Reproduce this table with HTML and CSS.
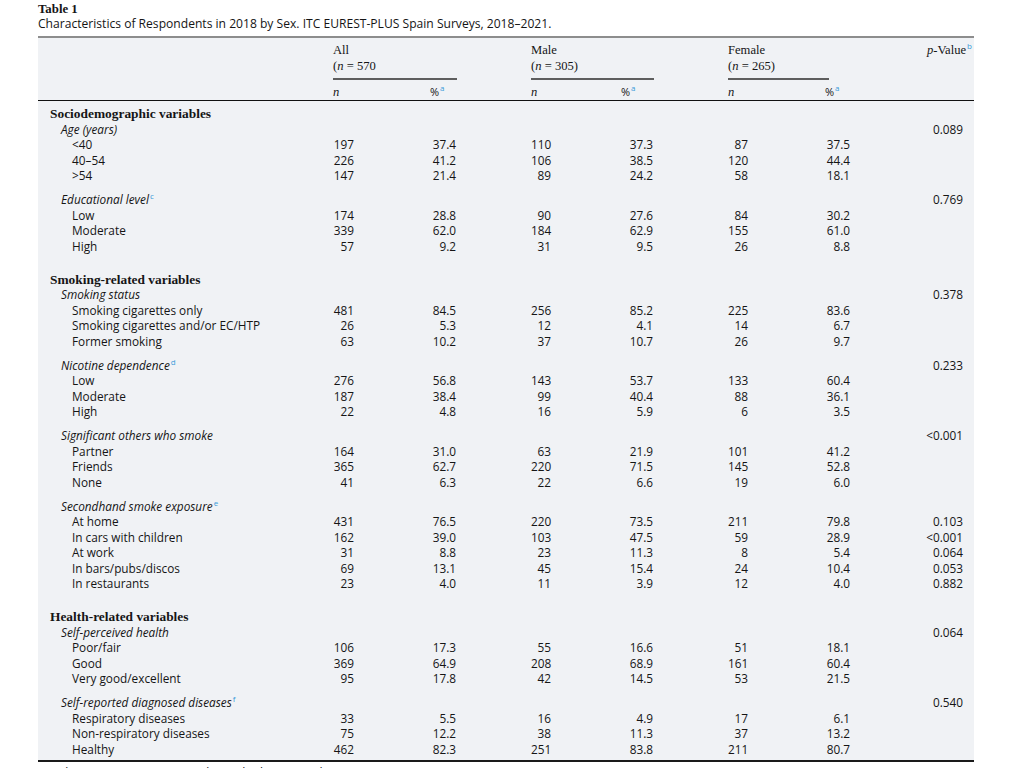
FILE: index.html
```html
<!DOCTYPE html>
<html lang="en">
<head>
<meta charset="utf-8">
<title>Table 1</title>
<link rel="stylesheet" href="styles.css">
</head>
<body>
<div class="page">
  <div class="tbl-title">Table 1</div>
  <div class="tbl-caption">Characteristics of Respondents in 2018 by Sex. ITC EUREST-PLUS Spain Surveys, 2018–2021.</div>
  <table class="tbl">
    <colgroup>
      <col class="w-label"><col class="w-an"><col class="w-ap"><col class="w-mn"><col class="w-mp"><col class="w-fn"><col class="w-fp"><col class="w-p">
    </colgroup>
    <thead>
      <tr class="h1">
        <th></th>
        <th colspan="2" class="grp"><div class="grp-name">All</div><div class="grp-n">(<i>n</i> = 570</div><div class="grp-line line-all"></div></th>
        <th colspan="2" class="grp"><div class="grp-name">Male</div><div class="grp-n">(<i>n</i> = 305)</div><div class="grp-line line-male"></div></th>
        <th colspan="2" class="grp"><div class="grp-name">Female</div><div class="grp-n">(<i>n</i> = 265)</div><div class="grp-line line-female"></div></th>
        <th class="pv"><i>p</i>-Value<sup class="fn">b</sup></th>
      </tr>
      <tr class="h2">
        <th></th>
        <th class="sub"><i>n</i></th>
        <th class="sub pct">%<sup class="fn">a</sup></th>
        <th class="sub"><i>n</i></th>
        <th class="sub pct">%<sup class="fn">a</sup></th>
        <th class="sub"><i>n</i></th>
        <th class="sub pct">%<sup class="fn">a</sup></th>
        <th></th>
      </tr>
    </thead>
    <tbody>
      <tr class="first"><td class="sec">Sociodemographic variables</td><td></td><td></td><td></td><td></td><td></td><td></td><td></td></tr>
      <tr><td class="grpl">Age (years)</td><td></td><td></td><td></td><td></td><td></td><td></td><td class="p">0.089</td></tr>
      <tr><td class="item">&lt;40</td><td class="an">197</td><td class="ap">37.4</td><td class="mn">110</td><td class="mp">37.3</td><td class="fnum">87</td><td class="fp">37.5</td><td class="p"></td></tr>
      <tr><td class="item">40–54</td><td class="an">226</td><td class="ap">41.2</td><td class="mn">106</td><td class="mp">38.5</td><td class="fnum">120</td><td class="fp">44.4</td><td class="p"></td></tr>
      <tr><td class="item">&gt;54</td><td class="an">147</td><td class="ap">21.4</td><td class="mn">89</td><td class="mp">24.2</td><td class="fnum">58</td><td class="fp">18.1</td><td class="p"></td></tr>

      <tr class="gap"><td class="grpl">Educational level<sup class="fn">c</sup></td><td></td><td></td><td></td><td></td><td></td><td></td><td class="p">0.769</td></tr>
      <tr><td class="item">Low</td><td class="an">174</td><td class="ap">28.8</td><td class="mn">90</td><td class="mp">27.6</td><td class="fnum">84</td><td class="fp">30.2</td><td class="p"></td></tr>
      <tr><td class="item">Moderate</td><td class="an">339</td><td class="ap">62.0</td><td class="mn">184</td><td class="mp">62.9</td><td class="fnum">155</td><td class="fp">61.0</td><td class="p"></td></tr>
      <tr><td class="item">High</td><td class="an">57</td><td class="ap">9.2</td><td class="mn">31</td><td class="mp">9.5</td><td class="fnum">26</td><td class="fp">8.8</td><td class="p"></td></tr>

      <tr class="secgap"><td class="sec">Smoking-related variables</td><td></td><td></td><td></td><td></td><td></td><td></td><td></td></tr>
      <tr><td class="grpl">Smoking status</td><td></td><td></td><td></td><td></td><td></td><td></td><td class="p">0.378</td></tr>
      <tr><td class="item">Smoking cigarettes only</td><td class="an">481</td><td class="ap">84.5</td><td class="mn">256</td><td class="mp">85.2</td><td class="fnum">225</td><td class="fp">83.6</td><td class="p"></td></tr>
      <tr><td class="item">Smoking cigarettes and/or EC/HTP</td><td class="an">26</td><td class="ap">5.3</td><td class="mn">12</td><td class="mp">4.1</td><td class="fnum">14</td><td class="fp">6.7</td><td class="p"></td></tr>
      <tr><td class="item">Former smoking</td><td class="an">63</td><td class="ap">10.2</td><td class="mn">37</td><td class="mp">10.7</td><td class="fnum">26</td><td class="fp">9.7</td><td class="p"></td></tr>

      <tr class="gap"><td class="grpl">Nicotine dependence<sup class="fn">d</sup></td><td></td><td></td><td></td><td></td><td></td><td></td><td class="p">0.233</td></tr>
      <tr><td class="item">Low</td><td class="an">276</td><td class="ap">56.8</td><td class="mn">143</td><td class="mp">53.7</td><td class="fnum">133</td><td class="fp">60.4</td><td class="p"></td></tr>
      <tr><td class="item">Moderate</td><td class="an">187</td><td class="ap">38.4</td><td class="mn">99</td><td class="mp">40.4</td><td class="fnum">88</td><td class="fp">36.1</td><td class="p"></td></tr>
      <tr><td class="item">High</td><td class="an">22</td><td class="ap">4.8</td><td class="mn">16</td><td class="mp">5.9</td><td class="fnum">6</td><td class="fp">3.5</td><td class="p"></td></tr>

      <tr class="gap"><td class="grpl">Significant others who smoke</td><td></td><td></td><td></td><td></td><td></td><td></td><td class="p">&lt;0.001</td></tr>
      <tr><td class="item">Partner</td><td class="an">164</td><td class="ap">31.0</td><td class="mn">63</td><td class="mp">21.9</td><td class="fnum">101</td><td class="fp">41.2</td><td class="p"></td></tr>
      <tr><td class="item">Friends</td><td class="an">365</td><td class="ap">62.7</td><td class="mn">220</td><td class="mp">71.5</td><td class="fnum">145</td><td class="fp">52.8</td><td class="p"></td></tr>
      <tr><td class="item">None</td><td class="an">41</td><td class="ap">6.3</td><td class="mn">22</td><td class="mp">6.6</td><td class="fnum">19</td><td class="fp">6.0</td><td class="p"></td></tr>

      <tr class="gap"><td class="grpl">Secondhand smoke exposure<sup class="fn">e</sup></td><td></td><td></td><td></td><td></td><td></td><td></td><td class="p"></td></tr>
      <tr><td class="item">At home</td><td class="an">431</td><td class="ap">76.5</td><td class="mn">220</td><td class="mp">73.5</td><td class="fnum">211</td><td class="fp">79.8</td><td class="p">0.103</td></tr>
      <tr><td class="item">In cars with children</td><td class="an">162</td><td class="ap">39.0</td><td class="mn">103</td><td class="mp">47.5</td><td class="fnum">59</td><td class="fp">28.9</td><td class="p">&lt;0.001</td></tr>
      <tr><td class="item">At work</td><td class="an">31</td><td class="ap">8.8</td><td class="mn">23</td><td class="mp">11.3</td><td class="fnum">8</td><td class="fp">5.4</td><td class="p">0.064</td></tr>
      <tr><td class="item">In bars/pubs/discos</td><td class="an">69</td><td class="ap">13.1</td><td class="mn">45</td><td class="mp">15.4</td><td class="fnum">24</td><td class="fp">10.4</td><td class="p">0.053</td></tr>
      <tr><td class="item">In restaurants</td><td class="an">23</td><td class="ap">4.0</td><td class="mn">11</td><td class="mp">3.9</td><td class="fnum">12</td><td class="fp">4.0</td><td class="p">0.882</td></tr>

      <tr class="secgap"><td class="sec">Health-related variables</td><td></td><td></td><td></td><td></td><td></td><td></td><td></td></tr>
      <tr><td class="grpl">Self-perceived health</td><td></td><td></td><td></td><td></td><td></td><td></td><td class="p">0.064</td></tr>
      <tr><td class="item">Poor/fair</td><td class="an">106</td><td class="ap">17.3</td><td class="mn">55</td><td class="mp">16.6</td><td class="fnum">51</td><td class="fp">18.1</td><td class="p"></td></tr>
      <tr><td class="item">Good</td><td class="an">369</td><td class="ap">64.9</td><td class="mn">208</td><td class="mp">68.9</td><td class="fnum">161</td><td class="fp">60.4</td><td class="p"></td></tr>
      <tr><td class="item">Very good/excellent</td><td class="an">95</td><td class="ap">17.8</td><td class="mn">42</td><td class="mp">14.5</td><td class="fnum">53</td><td class="fp">21.5</td><td class="p"></td></tr>

      <tr class="gap"><td class="grpl">Self-reported diagnosed diseases<sup class="fn">f</sup></td><td></td><td></td><td></td><td></td><td></td><td></td><td class="p">0.540</td></tr>
      <tr><td class="item">Respiratory diseases</td><td class="an">33</td><td class="ap">5.5</td><td class="mn">16</td><td class="mp">4.9</td><td class="fnum">17</td><td class="fp">6.1</td><td class="p"></td></tr>
      <tr><td class="item">Non-respiratory diseases</td><td class="an">75</td><td class="ap">12.2</td><td class="mn">38</td><td class="mp">11.3</td><td class="fnum">37</td><td class="fp">13.2</td><td class="p"></td></tr>
      <tr class="last"><td class="item">Healthy</td><td class="an">462</td><td class="ap">82.3</td><td class="mn">251</td><td class="mp">83.8</td><td class="fnum">211</td><td class="fp">80.7</td><td class="p"></td></tr>
    </tbody>
  </table>
  <p class="tbl-foot">EC, electronic cigarettes; HTP, heated tobacco products.</p>
</div>
</body>
</html>
```

FILE: styles.css
```css
html, body {
  margin: 0;
  padding: 0;
  background: #ffffff;
}

body {
  color: #151515;
  font-family: "Open Sans", "Noto Sans", "DejaVu Sans", sans-serif;
  font-size: 11.8px;
  font-weight: 500;
}

.page {
  padding: 2px 50px 0 38px;
  width: 936px;
}

.tbl-title {
  font-family: "Liberation Serif", "DejaVu Serif", serif;
  font-weight: bold;
  font-size: 12.8px;
  line-height: 14px;
}

.tbl-caption {
  font-size: 12.1px;
  line-height: 16px;
  margin-bottom: 4px;
}

.tbl {
  width: 936px;
  table-layout: fixed;
  border-collapse: collapse;
  background: #f0f2f5;
  border-top: 2px solid #8d8d8d;
  border-bottom: 2px solid #1a1a1a;
}

.w-label { width: 295px; }
.w-an { width: 97px; }
.w-ap { width: 101px; }
.w-mn { width: 90px; }
.w-mp { width: 107px; }
.w-fn { width: 97px; }
.w-fp { width: 50px; }
.w-p { width: 99px; }

.tbl th, .tbl td {
  padding: 0;
  vertical-align: top;
  font-weight: 500;
  text-align: left;
  white-space: nowrap;
}

.tbl thead th {
  font-family: "Liberation Serif", "DejaVu Serif", serif;
  font-size: 12.6px;
  line-height: 16px;
}

.h1 th {
  padding-top: 4px;
}

.grp-line {
  height: 2px;
  background: #5e5e5e;
  margin-top: 4px;
}

.line-all { width: 124px; }
.line-male { width: 123px; }
.line-female { width: 101px; }

.tbl th.pv {
  text-align: right;
  padding-right: 2px;
}

.h2 th {
  padding-top: 4px;
  border-bottom: 1px solid #111111;
  padding-bottom: 0;
}

.tbl .h2 th.pct {
  font-family: "Open Sans", "Noto Sans", sans-serif;
  font-size: 11px;
}

.fn {
  color: #3a9ad9;
  font-size: 8px;
  line-height: 0;
  vertical-align: 5px;
  font-style: normal;
  font-weight: normal;
  font-family: "Open Sans", "Noto Sans", sans-serif;
  margin-left: 1px;
}

.tbl tbody td {
  line-height: 15.5px;
}

.tbl tbody tr.first td { padding-top: 5px; }
.tbl tbody tr.gap td { padding-top: 8.5px; }
.tbl tbody tr.secgap td { padding-top: 17.6px; }
.tbl tbody tr.last td { padding-bottom: 3px; }

.tbl td.sec {
  font-family: "Liberation Serif", "DejaVu Serif", serif;
  font-weight: bold;
  font-size: 13.4px;
  padding-left: 12px;
}

.tbl td.grpl {
  font-style: italic;
  padding-left: 23px;
}

.tbl td.item {
  padding-left: 34px;
}

.tbl td.an { text-align: right; padding-right: 76px; }
.tbl td.ap { text-align: right; padding-right: 75px; }
.tbl td.mn { text-align: right; padding-right: 70px; }
.tbl td.mp { text-align: right; padding-right: 75px; }
.tbl td.fnum { text-align: right; padding-right: 77px; }
.tbl td.fp { text-align: right; padding-right: 25px; }
.tbl td.p { text-align: right; padding-right: 11px; }

.tbl-foot {
  margin: 3px 0 0 0;
  font-size: 12px;
  line-height: 16px;
}
```
